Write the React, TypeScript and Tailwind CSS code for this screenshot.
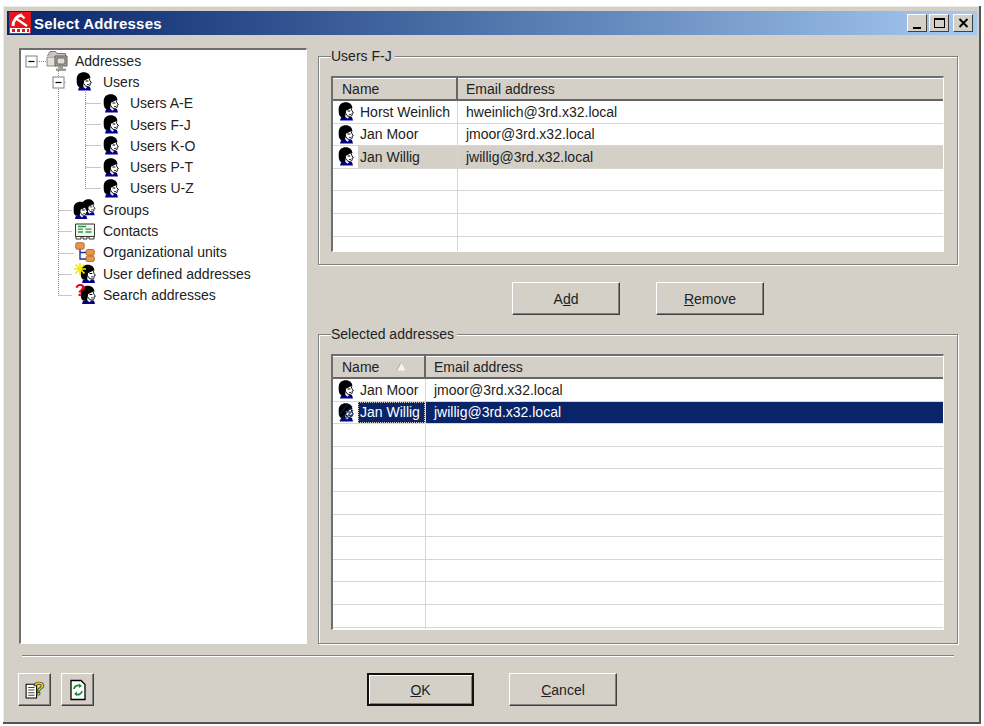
import type { ReactNode } from "react";

const Head = () => (
  <>
    <path d="M3 15.200 6 14.500l5 .5 3 0 1 3.500H2z" fill="#00008b" />
    <path d="M7 14.500h4.500L9.500 16.800z" fill="#fff" />
    <path d="M8 .3C3.500.3.700 3 .7 7c0 3-.2 6 1.800 7.800L7 15.500 8 9 13 6l1.400.3C14.400 2.500 11.500.3 8 .3z" fill="#000" />
    <path d="M7.500 8.500 13 5.800l.9 2.900 1.500 2.100-1.300.5.1 2-2 1.200-2.500-.3-2.200-3z" fill="#fff" stroke="#000" strokeWidth=".9" />
    <path d="M9.500 8.500h2.800v1H9.500zM11 12h2v.8h-2z" fill="#000" />
  </>
);

const Person = ({ selected = false, className = "w-[16px] h-[19px]" }: { selected?: boolean; className?: string }) => (
  <svg viewBox="0 0 16 19" className={className}>
    <Head />
    {selected && <path d="M2 18 14 3M5 18 15 7M1 12 10 1M8 18 15 11" stroke="#0a246a" strokeWidth="1.300" opacity=".8" />}
  </svg>
);

const Addresses = () => (
  <svg viewBox="0 0 22 22" className="w-[22px] h-[22px]">
    <path d="M1.500 6 4 1.500h5.500L11 3.500h8.500V7" fill="#c9c6bf" stroke="#6f6d68" strokeWidth=".9" />
    <path d="M1 7h8.500v9H1z" fill="#e2e0da" stroke="#77756f" strokeWidth=".8" />
    <path d="M9 6h12v10H9z" fill="#b0ada6" stroke="#5f5d58" />
    <path d="M11 8h8v6h-8z" fill="#dedcd6" stroke="#4a4844" strokeWidth=".8" />
    <path d="M13 16h4v2.500h3V21H10v-2.500h3z" fill="#a09d97" />
  </svg>
);

const Groups = () => (
  <svg viewBox="0 0 23 21" className="w-[23px] h-[21px]">
    <g transform="translate(8.500 0) scale(.88)"><Head /></g>
    <g transform="translate(0 2.500) scale(.95)"><Head /></g>
  </svg>
);

const Contacts = () => (
  <svg viewBox="0 0 22 17" className="w-[22px] h-[17px]">
    <path d="M1.500 1h19v12.500h-19z" fill="#f1f6ea" stroke="#333" />
    <path d="M4 3.500h8M4 6.200h5M11.500 6.200h6M4 9h5M11.500 9h6" stroke="#2f9a4a" strokeWidth="1.300" />
    <path d="M2 13.500V16h5v-2.500M9 13.500V16h4v-2.500M15 13.500V16h5v-2.500" stroke="#333" strokeWidth="1" fill="none" />
  </svg>
);

const Units = () => (
  <svg viewBox="0 0 20 20" className="w-[20px] h-[20px]">
    <path d="M5 6v11h7M5 10.500h7" stroke="#1c2f9c" strokeWidth="1.400" fill="none" />
    <rect x=".7" y=".7" width="8.500" height="6.500" rx="1.500" fill="#e8974a" stroke="#99602c" strokeWidth=".8" />
    <rect x="11" y="7.500" width="8.300" height="5.800" rx="1.500" fill="#e8974a" stroke="#99602c" strokeWidth=".8" />
    <rect x="11" y="14" width="8.300" height="5.500" rx="1.500" fill="#e8974a" stroke="#99602c" strokeWidth=".8" />
  </svg>
);

const UserDefined = () => (
  <span className="relative block w-[22px] h-[20px]">
    <span className="absolute right-0 top-0"><Person className="w-[16px] h-[20px]" /></span>
    <svg viewBox="0 0 12 12" className="absolute left-0 top-[-1px] w-[12px] h-[12px]">
      <path d="M6 0v12M0 6h12M1.500 1.500l9 9M10.500 1.500l-9 9" stroke="#f5e800" strokeWidth="1.700" />
    </svg>
  </span>
);

const SearchUser = () => (
  <span className="relative block w-[22px] h-[20px]">
    <span className="absolute right-0 top-0"><Person className="w-[16px] h-[20px]" /></span>
    <span className="absolute left-[1px] top-[-2px] text-[17px] leading-[16px] font-bold text-[#e8001c]">?</span>
  </span>
);

const treeRows: { pad: string; icon: ReactNode; label: string; gap: string }[] = [
  { pad: "pl-[25px]", icon: <Addresses />, label: "Addresses", gap: "ml-[7px]" },
  { pad: "pl-[55px]", icon: <Person />, label: "Users", gap: "ml-[11px]" },
  { pad: "pl-[82px]", icon: <Person />, label: "Users A-E", gap: "ml-[11px]" },
  { pad: "pl-[82px]", icon: <Person />, label: "Users F-J", gap: "ml-[11px]" },
  { pad: "pl-[82px]", icon: <Person />, label: "Users K-O", gap: "ml-[11px]" },
  { pad: "pl-[82px]", icon: <Person />, label: "Users P-T", gap: "ml-[11px]" },
  { pad: "pl-[82px]", icon: <Person />, label: "Users U-Z", gap: "ml-[11px]" },
  { pad: "pl-[52px]", icon: <Groups />, label: "Groups", gap: "ml-[7px]" },
  { pad: "pl-[53px]", icon: <Contacts />, label: "Contacts", gap: "ml-[7px]" },
  { pad: "pl-[54px]", icon: <Units />, label: "Organizational units", gap: "ml-[8px]" },
  { pad: "pl-[53px]", icon: <UserDefined />, label: "User defined addresses", gap: "ml-[7px]" },
  { pad: "pl-[53px]", icon: <SearchUser />, label: "Search addresses", gap: "ml-[7px]" },
];

const Expander = ({ x, y }: { x: number; y: number }) => (
  <g>
    <rect x={x - 5.5} y={y - 5.5} width="11" height="11" fill="#fff" stroke="#808080" />
    <path d={`M${x - 3} ${y}h6`} stroke="#000" strokeWidth="1.200" />
  </g>
);

// dotted connectors and the +/- boxes sit over the rows
const TreeLines = () => (
  <svg className="absolute left-0 top-0 w-[120px] h-[260px]" fill="none">
    <g stroke="#8c8c8c" strokeDasharray="1 1">
      <path d="M16 11.500h9M37.500 17V245.500M37.500 32.500h8M64.500 38V138.500" />
      <path d="M64.500 53.500h16M64.500 74.500h16M64.500 95.500h16M64.500 117.500h16M64.500 138.500h16" />
      <path d="M37.500 160.500h14M37.500 181.500h14M37.500 203.500h16M37.500 224.500h14M37.500 245.500h14" />
    </g>
    <Expander x={10.5} y={11.5} />
    <Expander x={37.5} y={32.5} />
  </svg>
);

type Row = { name: string; email: string; state?: "inactive" | "active" };

const ListView = ({ colW, rows, rowCount, height, sort }: { colW: string; rows: Row[]; rowCount: number; height: string; sort?: boolean }) => (
  <div className={`${height} mr-[1px] border-t-2 border-l-2 border-[#6e6e6e] border-r border-b border-r-white border-b-white bg-white overflow-hidden`}>
    <div className="flex h-[23px] bg-[#d4d0c8] border-b-2 border-[#666] shadow-[inset_0_1px_0_#fff]">
      <div className={`${colW} shrink-0 flex items-center pl-[9px] border-r-2 border-[#666]`}>
        Name
        {sort && (
          <svg viewBox="0 0 10 9" className="ml-[17px] w-[10px] h-[9px]">
            <path d="M5 .5 9.500 8.500H.5z" fill="#f4f3ef" />
            <path d="M5 .5.500 8.500" stroke="#a8a59e" />
          </svg>
        )}
      </div>
      <div className="flex-1 flex items-center pl-[8px]">Email address</div>
    </div>
    {Array.from({ length: rowCount }).map((_, i) => {
      const r = rows[i];
      const hl = r?.state === "inactive" ? "bg-[#d4d0c8]" : r?.state === "active" ? "bg-[#0a246a] text-white" : "";
      const focus = r?.state === "active" ? "outline-1 outline-dotted outline-[#d4d0c8] -outline-offset-1" : "";
      return (
        <div key={i} className="flex h-[22.6px] border-b border-[#d9d6cf]">
          <div className={`${colW} shrink-0 flex items-center border-r border-[#d9d6cf]`}>
            {r && (
              <>
                <span className="w-[25px] h-full shrink-0 flex items-center pl-[5px] bg-white">
                  <Person selected={r.state === "active"} className="w-[16px] h-[19px]" />
                </span>
                <span className={`flex-1 h-full flex items-center pl-[2px] whitespace-nowrap ${hl} ${focus}`}>{r.name}</span>
              </>
            )}
          </div>
          <div className={`flex-1 flex items-center pl-[8px] ${hl}`}>{r?.email}</div>
        </div>
      );
    })}
  </div>
);

const Button = ({ children, width, isDefault = false }: { children: ReactNode; width: string; isDefault?: boolean }) => (
  <button
    className={`${width} h-[33px] flex items-center justify-center bg-[#d4d0c8] ${
      isDefault
        ? "border-2 border-[#111] shadow-[inset_1px_1px_0_#fff,inset_-1px_-1px_0_#808080]"
        : "border border-t-white border-l-white border-r-[#404040] border-b-[#404040] shadow-[inset_-1px_-1px_0_#808080]"
    }`}
  >
    {children}
  </button>
);

const Group = ({ title, height, children }: { title: string; height: string; children: ReactNode }) => (
  <fieldset className={`${height} px-[12px] border border-[#808080] shadow-[inset_1px_1px_0_#fff,1px_1px_0_#fff]`}>
    <legend className="pr-[3px] h-[16px] leading-[16px] bg-[#d4d0c8]">{title}</legend>
    <div className="mt-[12px]">{children}</div>
  </fieldset>
);

const CaptionButton = ({ children, extra = "" }: { children: ReactNode; extra?: string }) => (
  <span className={`w-[20px] h-[18px] flex items-center justify-center bg-[#d4d0c8] border border-t-white border-l-white border-r-[#404040] border-b-[#404040] ${extra}`}>
    {children}
  </span>
);

export default function App() {
  return (
    <div className="w-[984px] h-[726px] bg-white pt-[6px] pl-[3px] overflow-hidden text-[14px] leading-none text-[#222]" style={{ fontFamily: '"Liberation Sans", Arial, sans-serif' }}>
      <div className="w-[978px] h-[718px] bg-[#d4d0c8] pt-[5px] pl-[4px] pr-[2px] border-r-2 border-b-2 border-[#555] shadow-[inset_1px_1px_0_#eeece6]">
        {/* Title bar */}
        <div className="h-[24px] flex items-center pl-[2px] pr-[4px] bg-gradient-to-r from-[#0a246a] to-[#a6caf0]">
          <svg viewBox="0 0 22 22" className="w-[22px] h-[22px] shrink-0">
            <rect width="22" height="22" fill="#e8141c" />
            <path d="M4 14C4 8.500 8 3.500 13 3" stroke="#fff" strokeWidth="3" fill="none" />
            <path d="M7 6.500 18 14M12 3l3.500 3.500" stroke="#fff" strokeWidth="2.200" fill="none" />
            <path d="M1 16h20v5H1z" fill="#fff" />
            <path d="M3 17h3v3H3zM8 17h3v3H8zM13 17h3v3h-3zM18 17h2v3h-2z" fill="#e8141c" />
          </svg>
          <span className="ml-[3px] text-[15px] font-bold tracking-[0.2px] text-white">Select Addresses</span>
          <div className="ml-auto flex items-center">
            <CaptionButton>
              <span className="w-[8px] h-[2px] bg-black mt-[9px]" />
            </CaptionButton>
            <CaptionButton extra="ml-[2px]">
              <span className="w-[11px] h-[10px] border border-black border-t-2" />
            </CaptionButton>
            <CaptionButton extra="ml-[4px]">
              <svg viewBox="0 0 10 10" className="w-[11px] h-[10px]">
                <path d="M1 1 9 9M9 1 1 9" stroke="#000" strokeWidth="1.800" />
              </svg>
            </CaptionButton>
          </div>
        </div>

        {/* Body */}
        <div className="flex mt-[13px] ml-[12px]">
          <div className="relative w-[288px] h-[596px] bg-white border-t-2 border-l-2 border-[#6e6e6e] border-r border-b border-r-white border-b-white">
            {treeRows.map((r) => (
              <div key={r.label} className={`h-[21.3px] flex items-center ${r.pad}`}>
                <span className="flex items-center">{r.icon}</span>
                <span className={`${r.gap} whitespace-nowrap`}>{r.label}</span>
              </div>
            ))}
            <TreeLines />
          </div>

          <div className="ml-[11px] w-[640px] flex flex-col">
            <Group title="Users F-J" height="h-[217px]">
              <ListView
                colW="w-[125px]"
                height="h-[176px]"
                rowCount={7}
                rows={[
                  { name: "Horst Weinlich", email: "hweinlich@3rd.x32.local" },
                  { name: "Jan Moor", email: "jmoor@3rd.x32.local" },
                  { name: "Jan Willig", email: "jwillig@3rd.x32.local", state: "inactive" },
                ]}
              />
            </Group>
            <div className="flex mt-[17px] ml-[194px] gap-[36px]">
              <Button width="w-[108px]">
                <span>A<u>d</u>d</span>
              </Button>
              <Button width="w-[108px]">
                <span><u>R</u>emove</span>
              </Button>
            </div>
            <div className="mt-[11px]">
              <Group title="Selected addresses" height="h-[318px]">
                <ListView
                  colW="w-[93px]"
                  height="h-[276px]"
                  sort
                  rowCount={12}
                  rows={[
                    { name: "Jan Moor", email: "jmoor@3rd.x32.local" },
                    { name: "Jan Willig", email: "jwillig@3rd.x32.local", state: "active" },
                  ]}
                />
              </Group>
            </div>
          </div>
        </div>

        {/* Bottom bar */}
        <div className="ml-[15px] w-[932px] mt-[11px] h-[2px] border-t border-[#808080] border-b border-b-white" />
        <div className="flex mt-[16px] ml-[11px]">
          <Button width="w-[33px]">
            <span className="relative block w-[21px] h-[21px]">
              <svg viewBox="0 0 20 20" className="w-[21px] h-[21px]">
                <path d="M2 5h10v13H2z" fill="#fff" stroke="#000" />
                <path d="M4 8h6M4 10.500h6M4 13h6M4 15.500h6" stroke="#444" />
              </svg>
              <span className="absolute left-[9px] top-[1px] text-[19px] leading-[17px] font-bold text-[#f0e000] [-webkit-text-stroke:0.7px_#222]">?</span>
            </span>
          </Button>
          <div className="ml-[10px]">
            <Button width="w-[33px]">
              <svg viewBox="0 0 20 22" className="w-[20px] h-[22px]">
                <path d="M3 1.500h10l4 4v15H3z" fill="#fff" stroke="#000" strokeWidth="1.300" />
                <path d="M6 10a4 4 0 0 1 6-3M14 12a4 4 0 0 1-6 3" stroke="#109030" strokeWidth="1.800" fill="none" />
                <path d="M11 4.500l3 2.500-3 2zM9 12.500l-3 2.500 3 2z" fill="#109030" />
              </svg>
            </Button>
          </div>
          <div className="ml-[273px] flex gap-[35px]">
            <Button width="w-[107px]" isDefault>
              <span><u>O</u>K</span>
            </Button>
            <Button width="w-[108px]">
              <span><u>C</u>ancel</span>
            </Button>
          </div>
        </div>
      </div>
    </div>
  );
}
